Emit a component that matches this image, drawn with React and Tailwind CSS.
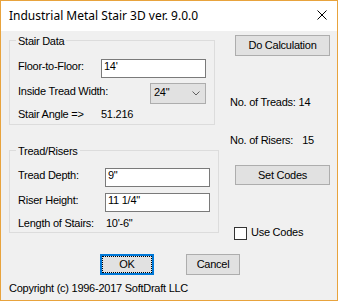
export default function App() {
  const body = "font-['Liberation_Sans',Arial,sans-serif] text-[11px] leading-[13px] tracking-[-0.25px] text-black";
  return (
    <div className="w-[338px] h-[301px] border border-[#e8a33d] bg-[#f0f0f0] flex flex-col overflow-hidden">
      <div className="h-[30px] shrink-0 bg-white flex items-center pl-[8px]">
        <span className="flex-1 font-['Noto_Sans',sans-serif] text-[12px] leading-[16px] text-black">
          Industrial Metal Stair 3D ver. 9.0.0
        </span>
        <svg className="mr-[10px] mb-[2px]" width="10" height="10" viewBox="0 0 10 10">
          <path d="M0.5 0.5 L9.5 9.5 M9.5 0.5 L0.5 9.5" stroke="#000" strokeWidth="1" fill="none" />
        </svg>
      </div>

      <div className={`flex h-[223px] shrink-0 ${body}`}>
        {/* left column */}
        <div className="pl-[8px] w-[218px] shrink-0">
          <div className="relative mt-[9px] w-[206px] h-[85px] border border-[#dcdcdc]">
            <span className="absolute -top-[6px] left-[6px] px-[2px] bg-[#f0f0f0]">Stair Data</span>
            <div className="flex items-start mt-[18px] pl-[8px]">
              <span className="w-[83px] pt-[1px]">Floor-to-Floor:</span>
              <div className="w-[105px] h-[19px] border border-[#7a7a7a] bg-white pl-[2px]">14'</div>
            </div>
            <div className="flex items-start mt-[5px] pl-[8px]">
              <span className="w-[132px] pt-[2px]">Inside Tread Width:</span>
              <div className="w-[56px] h-[21px] border border-[#adadad] bg-[#e1e1e1] flex justify-between items-center pl-[3px] pr-[5px]">
                <span className="self-start pt-[2px]">24"</span>
                <svg width="8" height="5" viewBox="0 0 8 5">
                  <path d="M0.5 0.5 L4 4 L7.5 0.5" stroke="#606060" strokeWidth="1" fill="none" />
                </svg>
              </div>
            </div>
            <div className="flex items-start mt-[4px] pl-[8px]">
              <span className="w-[83px]">Stair Angle =&gt;</span>
              <span>51.216</span>
            </div>
          </div>

          <div className="relative mt-[25px] w-[210px] h-[83px] border border-[#dcdcdc]">
            <span className="absolute -top-[6px] left-[6px] px-[2px] bg-[#f0f0f0]">Tread/Risers</span>
            <div className="flex items-start mt-[17px] pl-[8px]">
              <span className="w-[87px] pt-[1px]">Tread Depth:</span>
              <div className="w-[105px] h-[19px] border border-[#7a7a7a] bg-white pl-[2px]">9"</div>
            </div>
            <div className="flex items-start mt-[6px] pl-[8px]">
              <span className="w-[87px] pt-[1px]">Riser Height:</span>
              <div className="w-[105px] h-[19px] border border-[#7a7a7a] bg-white pl-[2px]">11 1/4"</div>
            </div>
            <div className="flex items-start mt-[5px] pl-[8px]">
              <span className="w-[88px]">Length of Stairs:</span>
              <span>10'-6"</span>
            </div>
          </div>
        </div>

        {/* right column */}
        <div className="flex-1 flex flex-col items-start">
          <button className="ml-[16px] mt-[4px] w-[95px] h-[21px] border border-[#adadad] bg-[#e1e1e1] flex items-center justify-center">
            Do Calculation
          </button>
          <div className="mt-[40px] pl-[11px] flex whitespace-nowrap">
            <span>No. of Treads:</span>
            <span className="ml-[3px]">14</span>
          </div>
          <div className="mt-[25px] pl-[11px] flex whitespace-nowrap">
            <span>No. of Risers:</span>
            <span className="ml-[9px]">15</span>
          </div>
          <button className="ml-[16px] mt-[18px] w-[95px] h-[20px] border border-[#adadad] bg-[#e1e1e1] flex items-center justify-center">
            Set Codes
          </button>
          <div className="mt-[41px] flex items-start">
            <div className="ml-[15px] mt-[1px] w-[13px] h-[13px] border border-[#333333] bg-white"></div>
            <span className="ml-[4px]">Use Codes</span>
          </div>
        </div>
      </div>

      <div className={`flex pl-[99px] shrink-0 ${body}`}>
        <button className="relative w-[54px] h-[21px] border-2 border-[#0078d7] bg-[#e1e1e1] flex items-center justify-center">
          <span className="absolute inset-0 border border-dotted border-black"></span>
          OK
        </button>
        <button className="ml-[32px] w-[54px] h-[21px] border border-[#adadad] bg-[#e1e1e1] flex items-center justify-center">
          Cancel
        </button>
      </div>
      <div className={`mt-[7px] pl-[8px] ${body}`}>Copyright (c) 1996-2017 SoftDraft LLC</div>
    </div>
  );
}
